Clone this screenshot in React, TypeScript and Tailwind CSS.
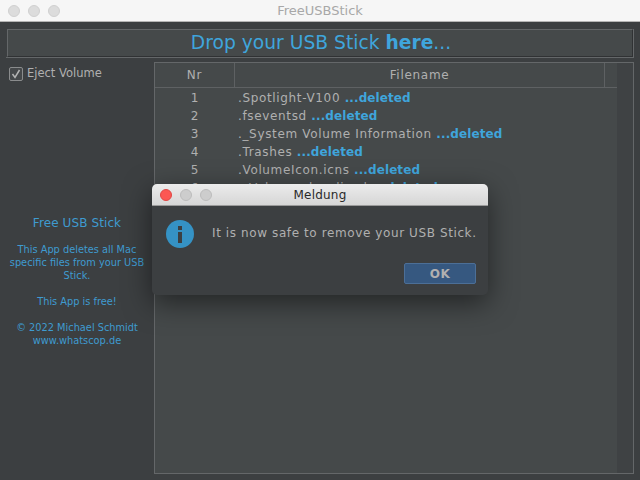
const font = { fontFamily: '"DejaVu Sans", sans-serif' };

const rows = [
  ".Spotlight-V100",
  ".fseventsd",
  "._System Volume Information",
  ".Trashes",
  ".VolumeIcon.icns",
  "._Volumes.localized",
];

function Light({ color }: { color: string }) {
  return <span className={`h-3 w-3 rounded-full border ${color}`} />;
}

function InfoIcon() {
  return (
    <svg className="shrink-0" width="28" height="28" viewBox="0 0 28 28">
      <circle cx="14" cy="14" r="14" fill="#3592c4" />
      <rect x="12" y="6" width="4" height="4" fill="#3c3f41" />
      <rect x="12" y="12" width="4" height="11" fill="#3c3f41" />
    </svg>
  );
}

export default function App() {
  return (
    <div
      className="relative flex h-[480px] w-[640px] flex-col overflow-hidden bg-[#3c3f41]"
      style={font}
    >
      <div className="flex h-[22px] shrink-0 items-center border-b border-[#b5b5b5] bg-[#f6f6f6] pl-2">
        <div className="flex gap-2">
          <Light color="bg-[#dcdcdc] border-[#d0d0d0]" />
          <Light color="bg-[#dcdcdc] border-[#d0d0d0]" />
          <Light color="bg-[#dcdcdc] border-[#d0d0d0]" />
        </div>
        <div className="flex-1 pr-[60px] text-center text-[13px] text-[#a8a8a8]">FreeUSBStick</div>
      </div>

      <div className="flex min-h-0 flex-1 flex-col px-[6px] pt-[7px] pb-[6px]">
        <div className="shrink-0 border-r border-b border-[#646769]">
          <div className="ml-px flex h-[28px] items-center justify-center border border-[#646769] border-r-[#303234] border-b-[#303234] bg-[#45494a] pl-[2px] text-[18.7px] text-[#3fa5dc]">
            <span>
              Drop your USB Stick <b className="font-bold">here</b>...
            </span>
          </div>
        </div>

        <div className="flex min-h-0 flex-1 pt-[4px]">
          <div className="flex w-[148px] shrink-0 flex-col">
            <div className="flex items-center gap-[4px] pt-[3px] pl-[3px] text-[11.5px] text-[#b0b0b0]">
              <span className="flex h-[14px] w-[14px] items-center justify-center rounded-[2px] border border-[#8a8c8d] bg-[#45484a]">
                <svg width="10" height="10" viewBox="0 0 10 10" fill="none">
                  <path d="M1.5 5 L4 8.5 L8.5 1" stroke="#b4b4b4" strokeWidth="1.5" />
                </svg>
              </span>
              Eject Volume
            </div>
            <div className="flex flex-1 flex-col items-center pt-[134px] pr-[6px] text-center text-[9.8px] leading-[13px] whitespace-nowrap text-[#3f9bd0]">
              <div className="mb-[13px] text-[12px] leading-[14px] tracking-[0.1px]">Free USB Stick</div>
              <p>
                This App deletes all Mac
                <br />
                specific files from your USB
                <br />
                Stick.
              </p>
              <p className="mt-[13px]">This App is free!</p>
              <p className="mt-[13px]">
                © 2022 Michael Schmidt
                <br />
                www.whatscop.de
              </p>
            </div>
          </div>

          <div className="flex min-w-0 flex-1 border border-[#646769] bg-[#45494a]">
            <div className="flex min-w-0 flex-1 flex-col">
              <div className="flex h-[25px] shrink-0 items-center border-b border-[#5e6163] text-[12px] tracking-[0.7px] text-[#b0b0b0]">
                <div className="flex h-full w-[80px] items-center justify-center border-r border-[#5e6163]">Nr</div>
                <div className="flex h-full w-[370px] items-center justify-center border-r border-[#5e6163]">Filename</div>
              </div>
              <div className="pt-px">
                {rows.map((name, i) => (
                  <div key={name} className="flex h-[18px] items-center text-[12px] tracking-[0.65px] text-[#b0b0b0]">
                    <div className="w-[80px] text-center">{i + 1}</div>
                    <div className="pl-[3px]">
                      {name} <b className="font-bold tracking-[0.1px] text-[#3fa5dc]">...deleted</b>
                    </div>
                  </div>
                ))}
              </div>
            </div>
            <div className="w-[16px] shrink-0 bg-[#3f4244]" />
          </div>
        </div>
      </div>

      <div className="absolute top-[184px] left-[152px] w-[336px] overflow-hidden rounded-[5px] bg-[#3c3f41] shadow-[0_8px_28px_rgba(0,0,0,0.5)]">
        <div className="flex h-[22px] items-center border-b border-[#9a9a9a] bg-gradient-to-b from-[#ececec] to-[#d6d6d6] pl-2">
          <div className="flex gap-2">
            <Light color="bg-[#fc5753] border-[#df4744]" />
            <Light color="bg-[#cdcdcd] border-[#bcbcbc]" />
            <Light color="bg-[#cdcdcd] border-[#bcbcbc]" />
          </div>
          <div className="flex-1 pr-[60px] text-center text-[12px] tracking-[0.2px] text-[#2a2a2a]">Meldung</div>
        </div>
        <div className="flex items-center gap-[18px] pt-[14px] pl-[14px] text-[12px] tracking-[0.6px] whitespace-nowrap text-[#b0b0b0]">
          <InfoIcon />
          <span className="-translate-y-px">It is now safe to remove your USB Stick.</span>
        </div>
        <div className="flex justify-end pt-[15px] pr-[12px] pb-[11px]">
          <button
            type="button"
            className="h-[21px] w-[72px] rounded-[2px] border border-[#4c6f97] bg-[#365880] text-[12px] font-bold tracking-[0.5px] text-[#b0b0b0]"
          >
            OK
          </button>
        </div>
      </div>
    </div>
  );
}
